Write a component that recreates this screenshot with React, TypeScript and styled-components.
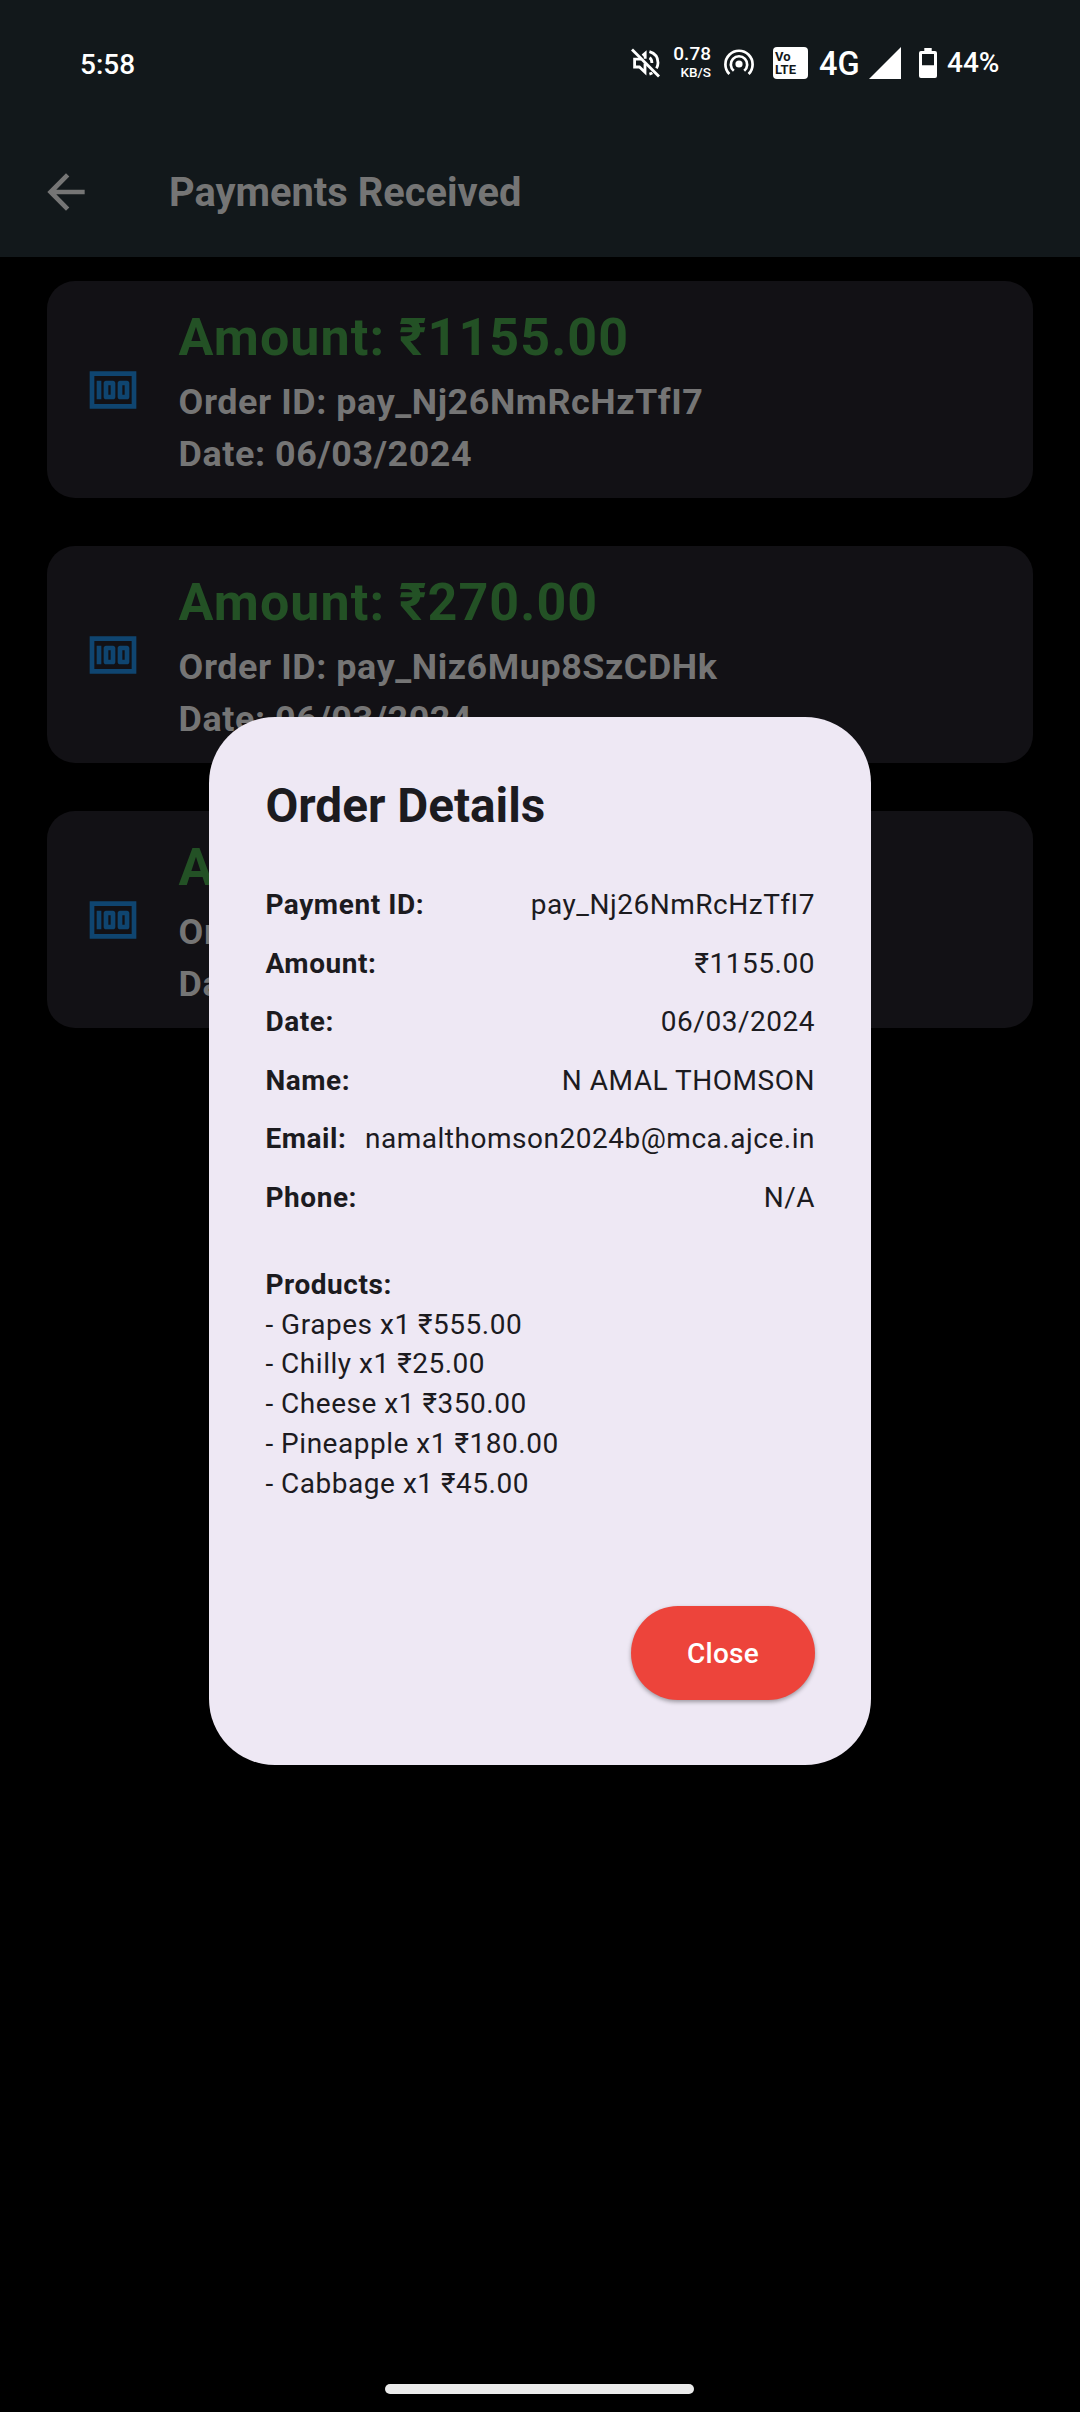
import React from "react";
import styled, { createGlobalStyle } from "styled-components";
import { MdArrowBack, MdMoney } from "react-icons/md";

const GlobalStyle = createGlobalStyle`
  * { box-sizing: border-box; }
  html, body { margin: 0; padding: 0; background: #000; }
  body { font-family: Roboto, "Noto Sans", sans-serif; }
`;

const Screen = styled.div`
  position: relative;
  display: flex;
  flex-direction: column;
  width: 1080px;
  height: 2412px;
  background: #000;
  overflow: hidden;
`;

const Header = styled.header`
  display: flex;
  flex-direction: column;
  height: 257px;
  background: #12181b;
`;

const StatusBar = styled.div`
  display: flex;
  align-items: center;
  justify-content: space-between;
  height: 126px;
  padding: 0 80px 0 80px;
  color: #fff;
`;

const Clock = styled.span`
  font-size: 28px;
  font-weight: 500;
  line-height: 34px;
  margin-top: 3px;
`;

const StatusIcons = styled.div`
  display: flex;
  align-items: center;
`;

const NetSpeed = styled.div`
  display: flex;
  flex-direction: column;
  align-items: flex-end;
  width: 40px;
  margin-left: 10px;
  font-weight: 500;
`;

const SpeedValue = styled.span`
  font-size: 19px;
  line-height: 18px;
`;

const SpeedUnit = styled.span`
  font-size: 13.5px;
  line-height: 18px;
`;

const StatusGlyph = styled.svg<{ $gap?: number }>`
  display: block;
  flex: none;
  margin-left: ${(p) => p.$gap ?? 0}px;
`;

const VolteBadge = styled.div`
  display: flex;
  flex-direction: column;
  justify-content: center;
  width: 35px;
  height: 32px;
  margin-left: 18px;
  padding-left: 2px;
  padding-bottom: 1px;
  border-radius: 4px;
  background: #fff;
  color: #12181b;
  font-size: 13px;
  font-weight: 700;
  line-height: 13px;
`;

const NetworkType = styled.span`
  width: 42px;
  margin-left: 11px;
  margin-top: 2px;
  font-size: 32.5px;
  font-weight: 500;
  line-height: 38px;
`;

const BatteryLevel = styled.span`
  width: 53px;
  margin-left: 10px;
  font-size: 28px;
  font-weight: 500;
  line-height: 34px;
  white-space: nowrap;
`;

const AppBar = styled.div`
  display: flex;
  align-items: center;
  height: 131px;
  padding-left: 38px;
  color: #757575;
`;

const BackIcon = styled(MdArrowBack)`
  width: 56px;
  height: 56px;
`;

const PageTitle = styled.h1`
  margin: 2px 0 0 75px;
  font-size: 39.85px;
  font-weight: 700;
  line-height: 48px;
`;

const PaymentList = styled.main`
  display: flex;
  flex-direction: column;
  gap: 47.4px;
  padding: 23.6px 47px;
`;

const PaymentCard = styled.article`
  display: flex;
  align-items: center;
  height: 217.6px;
  padding-left: 37.6px;
  border-radius: 28px;
  background: #121115;
`;

const MoneyIcon = styled(MdMoney)`
  flex: none;
  width: 56px;
  height: 56px;
  margin-top: 1px;
  color: #0f4570;
`;

const PaymentText = styled.div`
  display: flex;
  flex-direction: column;
  margin-left: 38px;
  padding: 8px 0 1px;
  color: #757575;
  font-size: 35.9px;
  font-weight: 700;
  line-height: 52px;
  letter-spacing: 0.57px;
`;

const PaymentAmount = styled.div`
  margin-bottom: 5px;
  color: #235125;
  font-size: 52px;
  line-height: 66px;
  letter-spacing: 1.07px;
`;

const Dialog = styled.section`
  position: absolute;
  left: 209px;
  top: 717px;
  display: flex;
  flex-direction: column;
  width: 662px;
  height: 1048px;
  padding: 56px 56px 56px 56.4px;
  border-radius: 66px;
  background: #eee8f4;
  color: #1c1b1f;
  font-size: 28px;
  line-height: 39.8px;
  letter-spacing: 0.52px;
`;

const DialogTitle = styled.h2`
  margin: 0 0 35.7px;
  font-size: 47.7px;
  font-weight: 700;
  line-height: 67px;
  letter-spacing: 0;
`;

const DetailRow = styled.div`
  display: flex;
  justify-content: space-between;
  padding: 9.4px 0;
`;

const Label = styled.span`
  font-weight: 700;
  letter-spacing: 0.57px;
`;

const Products = styled.div`
  display: flex;
  flex-direction: column;
  margin-top: 37.6px;
`;

const CloseButton = styled.button`
  align-self: flex-end;
  width: 184px;
  height: 94px;
  margin-top: auto;
  margin-bottom: 9.5px;
  padding-top: 3px;
  border: 0;
  border-radius: 47px;
  background: #ed443b;
  box-shadow: 0 2px 4px rgba(0, 0, 0, 0.35);
  color: #fff;
  font-family: inherit;
  font-size: 28px;
  font-weight: 500;
  letter-spacing: 0.25px;
`;

const HomeIndicator = styled.div`
  width: 309px;
  height: 10px;
  margin: auto 0 18px 385px;
  border-radius: 5px;
  background: #ebebeb;
`;

const payments = [
  { amount: "₹1155.00", id: "pay_Nj26NmRcHzTfI7", date: "06/03/2024" },
  { amount: "₹270.00", id: "pay_Niz6Mup8SzCDHk", date: "06/03/2024" },
  { amount: "", id: "", date: "" },
];

const details = [
  ["Payment ID:", "pay_Nj26NmRcHzTfI7"],
  ["Amount:", "₹1155.00"],
  ["Date:", "06/03/2024"],
  ["Name:", "N AMAL THOMSON"],
  ["Email:", "namalthomson2024b@mca.ajce.in"],
  ["Phone:", "N/A"],
];

const products = [
  "- Grapes x1 ₹555.00",
  "- Chilly x1 ₹25.00",
  "- Cheese x1 ₹350.00",
  "- Pineapple x1 ₹180.00",
  "- Cabbage x1 ₹45.00",
];

const MutedIcon = () => (
  <StatusGlyph width="30" height="30" viewBox="0 0 30 30" fill="none" stroke="#fff" strokeWidth="2.8">
    <path d="M10 11.2H3.6v7.800h4.800l5.600 5.200v-8.800" />
    <path d="M11.600 7.600l2.600-2.300v5.500" />
    <path d="M18.500 9.800c1.600 1 2.400 2.800 2.400 5.200" />
    <path d="M18.400 3.600c5.500 1.600 8.600 6 8.600 11.200 0 2-.5 3.900-1.500 5.600" />
    <path d="M18.400 26.200c1-.3 2-.7 2.900-1.300" />
    <path d="M1 1.500l27 27" />
  </StatusGlyph>
);

const HotspotIcon = () => (
  <StatusGlyph $gap={12} width="32" height="30" viewBox="0 0 32 30" fill="none" stroke="#fff" strokeWidth="2.7">
    <circle cx="16" cy="16" r="3.600" fill="#fff" stroke="none" />
    <path d="M10.800 22.800a8.200 8.200 0 1 1 10.400 0" />
    <path d="M6.400 26a13.600 13.600 0 1 1 19.200 0" />
  </StatusGlyph>
);

const SignalIcon = () => (
  <StatusGlyph $gap={8} width="32" height="32" viewBox="0 0 32 32" fill="#fff">
    <path d="M32 0v32H0z" />
  </StatusGlyph>
);

const BatteryIcon = () => (
  <StatusGlyph $gap={18} width="18" height="30" viewBox="0 0 18 30">
    <path
      fill="#fff"
      fillRule="evenodd"
      d="M5.300 0h7.400v3H16a2 2 0 0 1 2 2v23a2 2 0 0 1-2 2H2a2 2 0 0 1-2-2V5a2 2 0 0 1 2-2h3.300zM3 6v11.300h12V6z"
    />
  </StatusGlyph>
);

export default function App() {
  return (
    <Screen>
      <GlobalStyle />
      <Header>
        <StatusBar>
          <Clock>5:58</Clock>
          <StatusIcons>
            <MutedIcon />
            <NetSpeed>
              <SpeedValue>0.78</SpeedValue>
              <SpeedUnit>KB/S</SpeedUnit>
            </NetSpeed>
            <HotspotIcon />
            <VolteBadge>
              <span>Vo</span>
              <span>LTE</span>
            </VolteBadge>
            <NetworkType>4G</NetworkType>
            <SignalIcon />
            <BatteryIcon />
            <BatteryLevel>44%</BatteryLevel>
          </StatusIcons>
        </StatusBar>
        <AppBar>
          <BackIcon />
          <PageTitle>Payments Received</PageTitle>
        </AppBar>
      </Header>
      <PaymentList>
        {payments.map((p, i) => (
          <PaymentCard key={i}>
            <MoneyIcon />
            <PaymentText>
              <PaymentAmount>Amount: {p.amount}</PaymentAmount>
              <div>Order ID: {p.id}</div>
              <div>Date: {p.date}</div>
            </PaymentText>
          </PaymentCard>
        ))}
      </PaymentList>
      <Dialog role="dialog">
        <DialogTitle>Order Details</DialogTitle>
        {details.map(([label, value]) => (
          <DetailRow key={label}>
            <Label>{label}</Label>
            <span>{value}</span>
          </DetailRow>
        ))}
        <Products>
          <Label>Products:</Label>
          {products.map((line) => (
            <span key={line}>{line}</span>
          ))}
        </Products>
        <CloseButton>Close</CloseButton>
      </Dialog>
      <HomeIndicator />
    </Screen>
  );
}
